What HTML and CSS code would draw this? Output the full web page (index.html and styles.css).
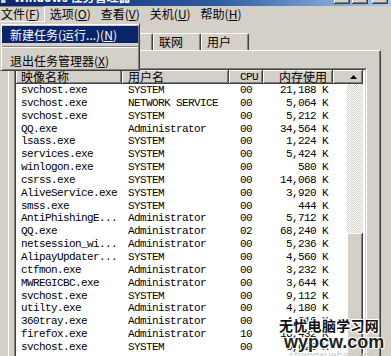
FILE: index.html
```html
<!DOCTYPE html>
<html>
<head>
<meta charset="utf-8">
<title>Windows 任务管理器</title>
<link rel="stylesheet" href="styles.css">
</head>
<body>
<div class="window">

    <div class="titlebar">
        <span class="title-icon"></span>
        <span class="title-text">Windows 任务管理器</span>
        <div class="title-buttons">
            <span class="tbtn"></span>
            <span class="tbtn"></span>
            <span class="tbtn close"></span>
        </div>
    </div>

    <div class="menubar">
        <span class="menu-item open">文件(<u>F</u>)</span>
        <span class="menu-item">选项(<u>O</u>)</span>
        <span class="menu-item">查看(<u>V</u>)</span>
        <span class="menu-item">关机(<u>U</u>)</span>
        <span class="menu-item">帮助(<u>H</u>)</span>
    </div>

    <div class="tabs">
        <span class="tab">应用程序</span>
        <span class="tab active">进程</span>
        <span class="tab last-hidden">性能</span>
        <span class="tab wide">联网</span>
        <span class="tab wide">用户</span>
    </div>

    <div class="panel">
        <div class="listbox">
            <div class="listinner">
                <div class="list-head">
                    <span class="hcell">映像名称</span>
                    <span class="hcell">用户名</span>
                    <span class="hcell mono cpu">CPU</span>
                    <span class="hcell mem">内存使用</span>
                    <span class="hcell arrow">
                        <svg width="7" height="4" viewBox="0 0 7 4"><path d="M3.5 0 L7 4 L0 4 Z" fill="#000"/></svg>
                    </span>
                </div>
                <div class="list-body">
                    <div class="rows"></div>
                    <div class="scrollbar">
                        <div class="track"></div>
                        <div class="thumb"></div>
                    </div>
                </div>
            </div>
        </div>
    </div>

    <div class="dropdown">
        <div class="ditem hot">新建任务(运行...)(<u>N</u>)</div>
        <div class="dsep"></div>
        <div class="ditem">退出任务管理器(<u>X</u>)</div>
    </div>

    <div class="watermark">
        <div class="wm-cn">无忧电脑学习网</div>
        <div class="wm-en">wypcw.com</div>
        <div class="wm-faint">shangxueba.com</div>
    </div>

</div>

<script>
    const processes = [
        ["svchost.exe", "SYSTEM", "00", "21,188 K"],
        ["svchost.exe", "NETWORK SERVICE", "00", "5,064 K"],
        ["svchost.exe", "SYSTEM", "00", "5,212 K"],
        ["QQ.exe", "Administrator", "00", "34,564 K"],
        ["lsass.exe", "SYSTEM", "00", "1,224 K"],
        ["services.exe", "SYSTEM", "00", "5,424 K"],
        ["winlogon.exe", "SYSTEM", "00", "580 K"],
        ["csrss.exe", "SYSTEM", "00", "14,068 K"],
        ["AliveService.exe", "SYSTEM", "00", "3,920 K"],
        ["smss.exe", "SYSTEM", "00", "444 K"],
        ["AntiPhishingE...", "Administrator", "00", "5,712 K"],
        ["QQ.exe", "Administrator", "02", "68,240 K"],
        ["netsession_wi...", "Administrator", "00", "5,236 K"],
        ["AlipayUpdater...", "SYSTEM", "00", "4,560 K"],
        ["ctfmon.exe", "Administrator", "00", "3,232 K"],
        ["MWREGICBC.exe", "Administrator", "00", "3,644 K"],
        ["svchost.exe", "SYSTEM", "00", "9,112 K"],
        ["utilty.exe", "Administrator", "00", "4,180 K"],
        ["360tray.exe", "Administrator", "00", "4,316 K"],
        ["firefox.exe", "Administrator", "10", "16,432 K"],
        ["svchost.exe", "SYSTEM", "00", "5,628 K"]
    ];

    const rows = document.querySelector('.rows');

    processes.forEach((p) => {
        const row = document.createElement('div');
        row.className = 'row';
        row.innerHTML =
            `<span class="c-name">${p[0]}</span>` +
            `<span class="c-user">${p[1]}</span>` +
            `<span class="c-cpu">${p[2]}</span>` +
            `<span class="c-mem">${p[3]}</span>`;
        rows.appendChild(row);
    });
</script>
</body>
</html>
```

FILE: styles.css
```css
body {
    margin: 0;
    background: #d4d0c8;
    font-family: "Noto Sans CJK SC", sans-serif;
    font-size: 12px;
    color: #000;
}

.window {
    position: relative;
    width: 391px;
    height: 356px;
    overflow: hidden;
    background: #d4d0c8;
}

/* title bar, mostly scrolled off the top */
.titlebar {
    display: flex;
    align-items: center;
    height: 18px;
    margin-top: -12px;
    padding-left: 1px;
    background: linear-gradient(to right, #0a246a, #2d5ba0 55%, #a6caf0);
    color: #fff;
    font-weight: bold;
}

.title-icon {
    width: 4px;
    height: 12px;
    margin-right: 8px;
    background: #d4d0c8;
    border-right: 1px solid #808080;
}

.title-text {
    flex: 1;
    line-height: 18px;
}

.title-buttons {
    display: flex;
    gap: 2px;
    padding-right: 3px;
    align-self: flex-start;
    padding-top: 2px;
}

.tbtn {
    width: 16px;
    height: 14px;
    box-sizing: border-box;
    background: #d4d0c8;
    border-right: 1px solid #404040;
    border-bottom: 1px solid #404040;
    box-shadow: inset 1px 1px #fff, inset -1px -1px #808080;
}

.tbtn.close {
    margin-left: 2px;
}

/* menu bar */
.menubar {
    display: flex;
    height: 16px;
    margin-left: -4px;
}

.menu-item {
    padding: 0 4px;
    line-height: 16px;
    border: 1px solid transparent;
    border-top: none;
    border-bottom: none;
}

.menu-item.open {
    border: 1px solid;
    border-color: #808080 #fff #fff #808080;
    line-height: 14px;
}

/* tabs */
.tabs {
    display: flex;
    align-items: flex-end;
    height: 19px;
    margin-top: 9px;
    padding-left: 15px;
}

.tab {
    height: 16px;
    padding: 0 4px;
    line-height: 16px;
    border: 1px solid;
    border-color: #fff #404040 transparent #fff;
    border-bottom: none;
    border-radius: 2px 2px 0 0;
    box-shadow: inset -1px 0 #808080;
}

.tab.active {
    height: 18px;
}

.tab.last-hidden {
    padding: 0 16px 0 4px;
}

.tab.wide {
    padding: 0 17px 0 5px;
}

/* tab page */
.panel {
    width: 373px;
    height: 320px;
    box-sizing: border-box;
    margin-left: 8px;
    padding: 17px 0 0 5px;
    border-top: 1px solid #fff;
    border-left: 1px solid #fff;
    border-right: 1px solid #404040;
    box-shadow: inset -1px 0 #808080;
}

.listbox {
    width: 351px;
    border: 1px solid;
    border-color: #808080 #fff #fff #808080;
}

.listinner {
    border: 1px solid;
    border-color: #404040 #d4d0c8 #d4d0c8 #404040;
    background: #fff;
}

.list-head {
    display: grid;
    grid-template-columns: 106px 107px 34px 70px 30px;
    height: 14px;
}

.hcell {
    box-sizing: border-box;
    height: 14px;
    line-height: 14px;
    background: #d4d0c8;
    border-right: 1px solid #404040;
    border-bottom: 1px solid #404040;
    box-shadow: inset 1px 1px #fff, inset -1px -1px #808080;
    padding-left: 5px;
    white-space: nowrap;
}

.hcell:nth-child(2) {
    padding-left: 6px;
}

.hcell.cpu {
    padding-left: 11px;
}

.hcell.mem {
    text-align: right;
    padding-right: 5px;
}

.hcell.arrow {
    display: flex;
    justify-content: flex-end;
    align-items: center;
    padding-right: 5px;
}

.mono,
.rows {
    font-family: "Liberation Mono", monospace;
    font-size: 11px;
    letter-spacing: -0.6px;
}

.list-body {
    display: flex;
    height: 280px;
}

.rows {
    width: 331px;
}

.row {
    display: grid;
    grid-template-columns: 106px 107px 34px 70px;
    height: 12.85px;
    line-height: 12.85px;
    white-space: nowrap;
}

.c-name {
    padding-left: 5px;
}

.c-user {
    padding-left: 6px;
}

.c-cpu {
    padding-left: 11px;
}

.c-mem {
    text-align: right;
    padding-right: 5px;
}

.scrollbar {
    display: flex;
    flex-direction: column;
    width: 16px;
}

.track {
    flex: 0 0 149px;
    background: repeating-conic-gradient(#d4d0c8 0 25%, #fff 0 50%) 0 0 / 2px 2px;
}

.thumb {
    flex: 1;
    background: #d4d0c8;
    border-right: 1px solid #404040;
    box-shadow: inset 1px 1px #fff, inset -1px 0 #808080;
}

/* open file menu */
.dropdown {
    position: absolute;
    left: 0;
    top: 23px;
    width: 140px;
    box-sizing: border-box;
    padding: 2px 1px 1px 1px;
    background: #d4d0c8;
    border: 1px solid;
    border-color: #d4d0c8 #404040 #404040 #d4d0c8;
    box-shadow: inset 1px 1px #fff, inset -1px -1px #808080;
}

.ditem {
    height: 17px;
    line-height: 17px;
    padding-left: 8px;
    white-space: nowrap;
}

.ditem.hot {
    background: #0a246a;
    color: #fff;
}

.dsep {
    height: 0;
    margin: 3px 0 4px;
    border-top: 1px solid #808080;
    border-bottom: 1px solid #fff;
}

/* site watermark over the corner */
.watermark {
    position: absolute;
    left: 279px;
    top: 316px;
    width: 112px;
}

.wm-cn {
    font-size: 14px;
    font-weight: bold;
    line-height: 18px;
    letter-spacing: 0.3px;
    color: #111;
    text-shadow: 1px 0 #fff, -1px 0 #fff, 0 1px #fff, 0 -1px #fff, 1px 1px #fff, -1px -1px #fff, 1px -1px #fff, -1px 1px #fff;
}

.wm-en {
    margin-left: 5px;
    font-family: "Liberation Sans", sans-serif;
    font-size: 18px;
    font-weight: bold;
    line-height: 16px;
    color: #222;
    text-shadow: 1px 0 #fff, -1px 0 #fff, 0 1px #fff, 0 -1px #fff, 1px 1px #fff, -1px -1px #fff;
}

.wm-faint {
    margin-left: 10px;
    font-family: "Liberation Sans", sans-serif;
    font-size: 11px;
    line-height: 10px;
    color: #c8c8c8;
}
```
